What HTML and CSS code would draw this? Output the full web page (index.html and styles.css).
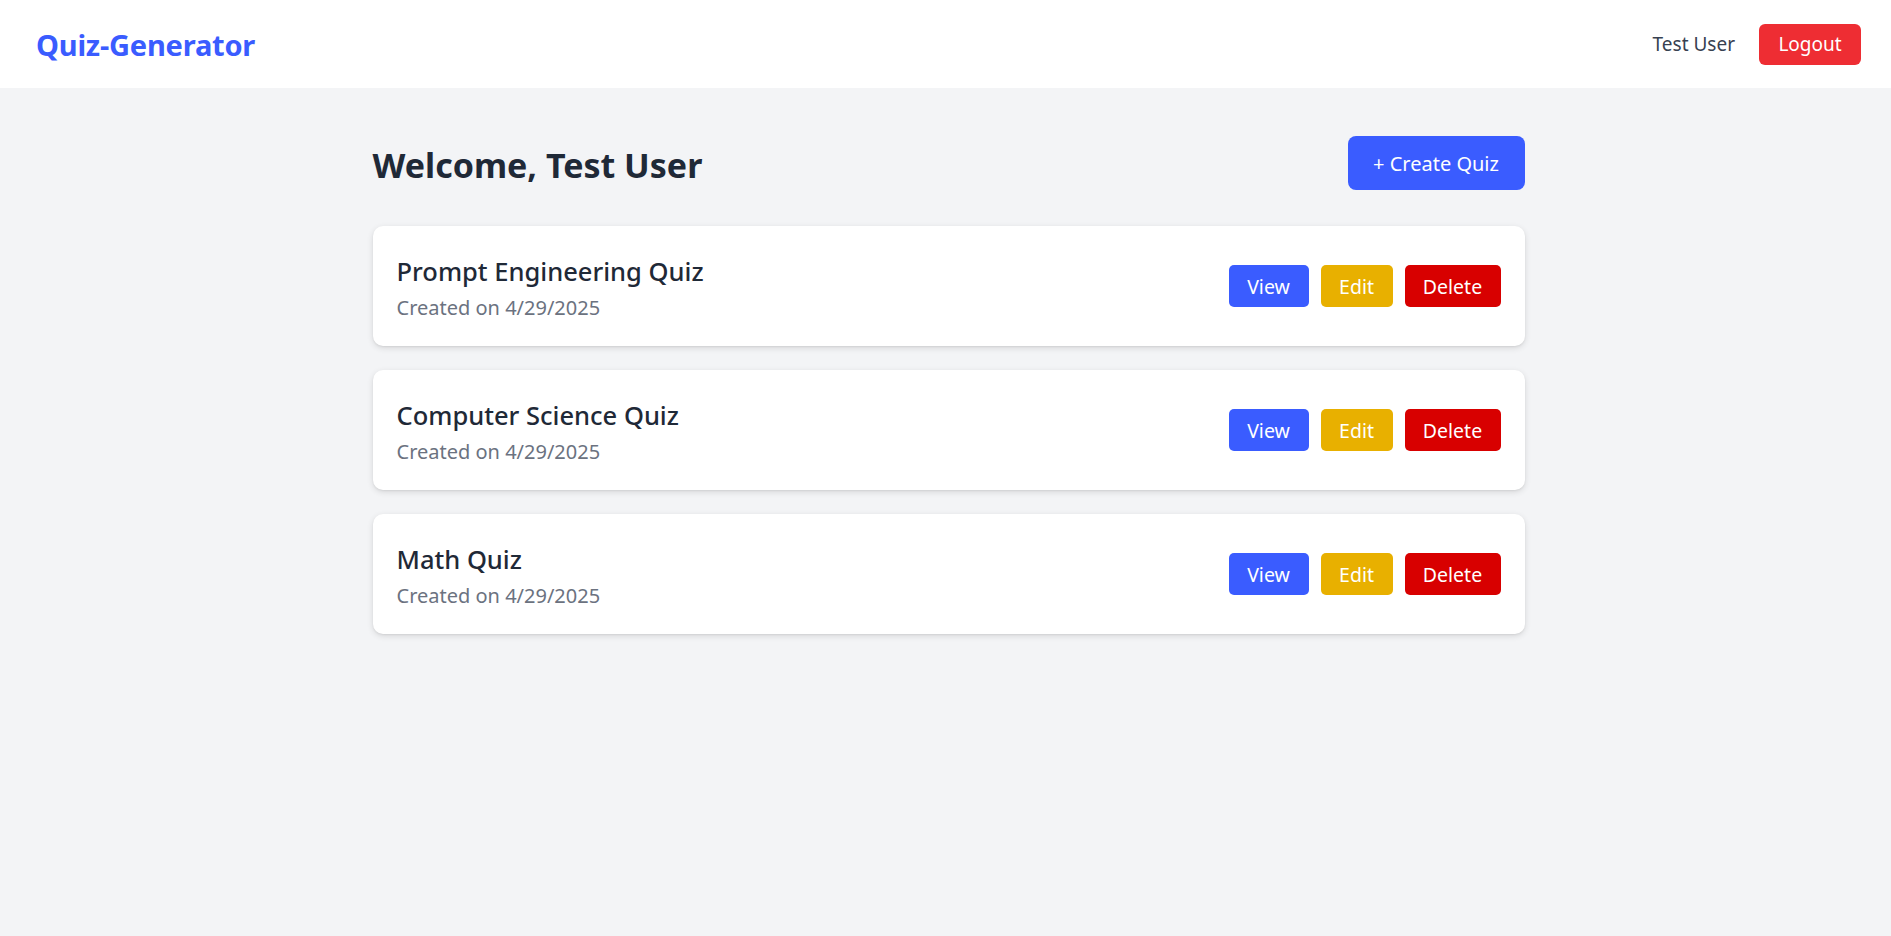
FILE: index.html
```html
<!DOCTYPE html>
<html lang="en">
<head>
<meta charset="utf-8">
<title>Quiz-Generator</title>
<link rel="stylesheet" href="styles.css">
</head>
<body>
<header class="topbar">
  <div class="logo">Quiz-Generator</div>
  <div class="nav-right">
    <span class="nav-user">Test User</span>
    <button class="btn btn-logout">Logout</button>
  </div>
</header>
<main class="main">
  <div class="container">
    <div class="welcome-row">
      <h1 class="welcome">Welcome, Test User</h1>
      <button class="btn btn-create">+ Create Quiz</button>
    </div>
    <div class="quiz-list">
      <div class="quiz-card">
        <div class="quiz-info">
          <div class="quiz-title">Prompt Engineering Quiz</div>
          <div class="quiz-date">Created on 4/29/2025</div>
        </div>
        <div class="quiz-actions">
          <button class="btn btn-small btn-view">View</button>
          <button class="btn btn-small btn-edit">Edit</button>
          <button class="btn btn-small btn-delete">Delete</button>
        </div>
      </div>
      <div class="quiz-card">
        <div class="quiz-info">
          <div class="quiz-title">Computer Science Quiz</div>
          <div class="quiz-date">Created on 4/29/2025</div>
        </div>
        <div class="quiz-actions">
          <button class="btn btn-small btn-view">View</button>
          <button class="btn btn-small btn-edit">Edit</button>
          <button class="btn btn-small btn-delete">Delete</button>
        </div>
      </div>
      <div class="quiz-card">
        <div class="quiz-info">
          <div class="quiz-title">Math Quiz</div>
          <div class="quiz-date">Created on 4/29/2025</div>
        </div>
        <div class="quiz-actions">
          <button class="btn btn-small btn-view">View</button>
          <button class="btn btn-small btn-edit">Edit</button>
          <button class="btn btn-small btn-delete">Delete</button>
        </div>
      </div>
    </div>
  </div>
</main>
</body>
</html>
```
FILE: styles.css
```css
* { box-sizing: border-box; }
html, body { margin: 0; padding: 0; }
body {
  background: #f3f4f6;
  font-family: "Noto Sans", "Open Sans", sans-serif;
  color: #1f2937;
  min-height: 936px;
}
.topbar {
  height: 88px;
  background: #ffffff;
  display: flex;
  align-items: center;
  justify-content: space-between;
  padding: 0 30px 0 36px;
}
.logo {
  font-size: 29px;
  font-weight: 700;
  color: #3a5cff;
  letter-spacing: -0.2px;
}
.nav-right {
  display: flex;
  align-items: center;
  gap: 24px;
}
.nav-user {
  font-size: 19px;
  color: #374151;
}
.btn {
  border: none;
  font-family: inherit;
  color: #ffffff;
  cursor: pointer;
  display: inline-flex;
  align-items: center;
  justify-content: center;
}
.btn-logout {
  background: #ee2d33;
  width: 102px;
  height: 41px;
  border-radius: 6px;
  font-size: 19px;
}
.main {
  padding-top: 48px;
}
.container {
  width: 1152px;
  margin-left: calc(50% - 573px);
}
.welcome-row {
  display: flex;
  align-items: center;
  justify-content: space-between;
  height: 54px;
  margin-bottom: 36px;
}
.welcome {
  margin: 0;
  font-size: 34px;
  font-weight: 700;
  color: #1f2937;
  padding-top: 4px;
}
.btn-create {
  background: #3a5cff;
  width: 177px;
  height: 54px;
  border-radius: 8px;
  font-size: 20px;
}
.quiz-list {
  display: flex;
  flex-direction: column;
  gap: 24px;
}
.quiz-card {
  height: 120px;
  background: #ffffff;
  border-radius: 10px;
  box-shadow: 0 2px 6px rgba(0,0,0,0.12), 0 1px 2px rgba(0,0,0,0.06);
  display: flex;
  align-items: center;
  justify-content: space-between;
  padding: 0 24px;
}
.quiz-info {
  display: flex;
  flex-direction: column;
  gap: 6px;
  padding-top: 4px;
}
.quiz-title {
  font-size: 25.5px;
  font-weight: 500;
  color: #1f2937;
  line-height: 34px;
}
.quiz-date {
  font-size: 20px;
  color: #6b7280;
  line-height: 28px;
}
.quiz-actions {
  display: flex;
  gap: 12px;
}
.btn-small {
  height: 42px;
  border-radius: 5px;
  font-size: 19.5px;
}
.btn-view { background: #3a5cff; width: 80px; }
.btn-edit { background: #e8b000; width: 72px; }
.btn-delete { background: #d80000; width: 96px; }
```
